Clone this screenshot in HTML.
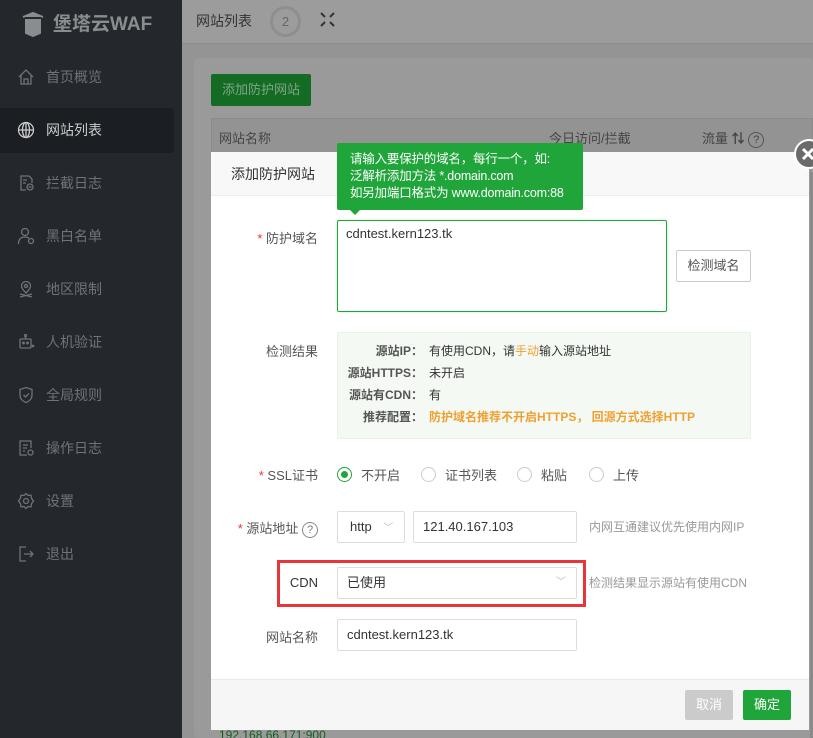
<!DOCTYPE html>
<html><head><meta charset="utf-8"><style>
*{box-sizing:border-box;margin:0;padding:0}
html,body{width:813px;height:738px;overflow:hidden}
body{position:relative;background:#949494;font-family:"Liberation Sans","Noto Sans CJK SC",sans-serif;font-size:13px;color:#333}
.abs{position:absolute}
#side{left:0;top:0;width:182px;height:738px;background:#24282d}
.mi{position:absolute;left:0;width:174px;height:45px;color:#6f7378;font-size:14px;line-height:45px;padding-left:46px}
.mi svg{position:absolute;left:17px;top:13px}
.mi.act{background:#1b1e22;color:#c9cbcd;border-radius:0 4px 4px 0}
.lbl{position:absolute;font-size:13px;color:#555;text-align:right}
.star{color:#e33}
.inp{position:absolute;border:1px solid #ddd;border-radius:2px;background:#fff;font-size:13px;color:#333;padding-left:9px}
.rad{position:absolute;width:15px;height:15px;border:1px solid #ccc;border-radius:50%;background:#fff}
.rt{position:absolute;font-size:13px;color:#555}
.hint{position:absolute;font-size:12px;color:#999}
</style></head><body>
<div id="side" class="abs">
  <svg class="abs" style="left:20px;top:11px" width="26" height="26" viewBox="0 0 26 26"><path d="M3 6 L13 2 L23 6 M5 9 H21 M6 9 V22 L13 25 L20 22 V9" fill="#8a8d90" stroke="#8a8d90" stroke-width="2"/></svg>
  <div class="abs" style="left:53px;top:9px;font-size:19px;font-weight:bold;color:#8a8d90">堡塔云WAF</div>
  <div class="mi" style="top:55px"><svg width="18" height="18" viewBox="0 0 18 18" fill="none" stroke="#6f7378" stroke-width="1.3"><path d="M2 9 L9 2 L16 9 M4 7 V16 H14 V7 M7 16 V11 H11 V16"/></svg>首页概览</div>
  <div class="mi act" style="top:108px"><svg width="18" height="18" viewBox="0 0 18 18" fill="none" stroke="#c9cbcd" stroke-width="1.3"><circle cx="9" cy="9" r="7.5"/><ellipse cx="9" cy="9" rx="3.5" ry="7.5"/><path d="M1.5 9H16.5M9 1.5V16.5"/></svg>网站列表</div>
  <div class="mi" style="top:161px"><svg width="18" height="18" viewBox="0 0 18 18" fill="none" stroke="#6f7378" stroke-width="1.3"><path d="M12 2H4V16H9M12 2L15 5V9M6 6H10M6 9H9"/><circle cx="13" cy="13" r="3"/><path d="M11.5 13H14.5"/></svg>拦截日志</div>
  <div class="mi" style="top:214px"><svg width="18" height="18" viewBox="0 0 18 18" fill="none" stroke="#6f7378" stroke-width="1.3"><circle cx="8" cy="5" r="3.5"/><path d="M1.5 17C1.5 12 4 10 8 10C10 10 11 10.5 12 11"/><circle cx="14" cy="14" r="2.5"/></svg>黑白名单</div>
  <div class="mi" style="top:267px"><svg width="18" height="18" viewBox="0 0 18 18" fill="none" stroke="#6f7378" stroke-width="1.3"><path d="M9 13C6 10 4.5 8 4.5 6A4.5 4.5 0 0 1 13.5 6C13.5 8 12 10 9 13Z"/><circle cx="9" cy="6" r="1.5"/><path d="M3 14L15 17M15 14L3 17"/></svg>地区限制</div>
  <div class="mi" style="top:320px"><svg width="18" height="18" viewBox="0 0 18 18" fill="none" stroke="#6f7378" stroke-width="1.3"><rect x="3" y="6" width="11" height="9" rx="1"/><path d="M8.5 6V3"/><circle cx="8.5" cy="2.5" r="1"/><circle cx="6.5" cy="10" r=".8"/><circle cx="10.5" cy="10" r=".8"/><path d="M15 12L17 14M17 12L15 14"/></svg>人机验证</div>
  <div class="mi" style="top:373px"><svg width="18" height="18" viewBox="0 0 18 18" fill="none" stroke="#6f7378" stroke-width="1.3"><path d="M9 1.5L15 3.5V9C15 13 12 15.5 9 16.5C6 15.5 3 13 3 9V3.5Z"/><path d="M6.5 9L8.5 11L12 7.5"/></svg>全局规则</div>
  <div class="mi" style="top:426px"><svg width="18" height="18" viewBox="0 0 18 18" fill="none" stroke="#6f7378" stroke-width="1.3"><path d="M10 16H3V2H14V9M6 6H11M6 9H10M6 12H8"/><circle cx="13.5" cy="13.5" r="2.5"/></svg>操作日志</div>
  <div class="mi" style="top:479px"><svg width="18" height="18" viewBox="0 0 18 18" fill="none" stroke="#6f7378" stroke-width="1.3"><path d="M9 1.5L11 3.5L14 3.2L14.5 6.2L16.5 9L14.5 11.8L14 14.8L11 14.5L9 16.5L7 14.5L4 14.8L3.5 11.8L1.5 9L3.5 6.2L4 3.2L7 3.5Z"/><circle cx="9" cy="9" r="2.5"/></svg>设置</div>
  <div class="mi" style="top:532px"><svg width="18" height="18" viewBox="0 0 18 18" fill="none" stroke="#6f7378" stroke-width="1.3"><path d="M9 2H3V16H9M7 9H16M13 6L16 9L13 12"/></svg>退出</div>
</div>
<div class="abs" style="left:182px;top:0;width:631px;height:44px;background:#9c9c9c;border-bottom:1px solid #8c8c8c"></div>
<div class="abs" style="left:196px;top:11px;font-size:14px;color:#333">网站列表</div>
<div class="abs" style="left:270px;top:6px;width:31px;height:31px;border:3px solid #8e8e8e;border-radius:50%;text-align:center;line-height:25px;color:#666;font-size:13px">2</div>
<svg class="abs" style="left:319px;top:11px" width="17" height="17" viewBox="0 0 17 17" fill="none" stroke="#333" stroke-width="2"><path d="M2 2L6 6M15 2L11 6M2 15L6 11M15 15L11 11"/></svg>
<div class="abs" style="left:194px;top:58px;width:619px;height:680px;background:#9a9a9a;border-radius:3px"></div>
<div class="abs" style="left:211px;top:74px;width:100px;height:32px;background:#146c24;border-radius:2px;color:#7fa585;font-size:13px;line-height:32px;text-align:center">添加防护网站</div>
<div class="abs" style="left:211px;top:118px;width:602px;height:36px;background:#939393;border:1px solid #8b8b8b"></div>
<div class="abs" style="left:219px;top:128px;color:#444">网站名称</div>
<div class="abs" style="left:549px;top:128px;color:#444">今日访问/拦截</div>
<div class="abs" style="left:702px;top:128px;color:#444">流量 <b>⇅</b> <span style="display:inline-block;width:16px;height:16px;border:1px solid #555;border-radius:50%;font-size:11px;text-align:center;line-height:14px">?</span></div>
<div class="abs" style="left:219px;top:728px;color:#135f1f;font-size:12px">192.168.66.171:900</div>

<!-- dialog -->
<div class="abs" style="left:211px;top:152px;width:598px;height:578px;background:#fff"></div>
<div class="abs" style="left:211px;top:152px;width:598px;height:44px;background:#f8f8f8;border-bottom:1px solid #eee"></div>
<div class="abs" style="left:231px;top:164px;font-size:14px;color:#333">添加防护网站</div>
<div class="abs" style="left:810px;top:172px;width:3px;height:566px;background:#8a8a8a"></div>
<div class="abs" style="left:794px;top:139px;width:30px;height:30px;border-radius:50%;background:#6a6a6a;border:2px solid #fff"></div>
<svg class="abs" style="left:801px;top:146px" width="12" height="16" viewBox="0 0 12 16" stroke="#fff" stroke-width="3"><path d="M2 3L12 13M12 3L2 13"/></svg>

<div class="lbl" style="left:230px;top:228px;width:88px"><span class="star">*</span> 防护域名</div>
<div class="abs" style="left:337px;top:220px;width:330px;height:92px;border:1px solid #20a53a;border-radius:2px;box-shadow:0 0 3px #c8eccf;padding:5px 8px;font-size:13px">cdntest.kern123.tk</div>
<div class="abs" style="left:676px;top:250px;width:75px;height:32px;border:1px solid #ccc;border-radius:2px;text-align:center;line-height:30px;font-size:13px;color:#555">检测域名</div>

<div class="abs" style="left:337px;top:143px;width:246px;height:67px;background:#20a53a;border-radius:2px;color:#fff;font-size:12.5px;line-height:17px;padding:8px 0 0 13px;white-space:nowrap;letter-spacing:-0.2px">请输入要保护的域名，每行一个，如:<br>泛解析添加方法 *.domain.com<br>如另加端口格式为 www.domain.com:88</div>
<div class="abs" style="left:350px;top:210px;width:0;height:0;border:5px solid transparent;border-top-color:#20a53a"></div>

<div class="lbl" style="left:230px;top:341px;width:88px">检测结果</div>
<div class="abs" style="left:337px;top:332px;width:414px;height:107px;background:#f4f9f4;border:1px solid #e8f2e8;border-radius:2px"></div>
<div class="abs" style="left:337px;top:340px;width:86px;text-align:right;font-weight:bold;color:#555;font-size:12px;line-height:22px">源站IP：<br>源站HTTPS：<br>源站有CDN：<br>推荐配置：</div>
<div class="abs" style="left:429px;top:340px;color:#333;font-size:12px;line-height:22px">有使用CDN，请<span style="color:#f0a030">手动</span>输入源站地址<br>未开启<br>有<br><b style="color:#f0a030">防护域名推荐不开启HTTPS， 回源方式选择HTTP</b></div>

<div class="lbl" style="left:230px;top:465px;width:88px"><span class="star">*</span> SSL证书</div>
<div class="rad" style="left:337px;top:467px;border-color:#20a53a"><div style="position:absolute;left:3px;top:3px;width:7px;height:7px;border-radius:50%;background:#20a53a"></div></div>
<div class="rt" style="left:361px;top:465px">不开启</div>
<div class="rad" style="left:421px;top:467px"></div><div class="rt" style="left:445px;top:465px">证书列表</div>
<div class="rad" style="left:517px;top:467px"></div><div class="rt" style="left:541px;top:465px">粘贴</div>
<div class="rad" style="left:589px;top:467px"></div><div class="rt" style="left:613px;top:465px">上传</div>

<div class="lbl" style="left:230px;top:518px;width:88px"><span class="star">*</span> 源站地址 <span style="display:inline-block;width:16px;height:16px;border:1px solid #888;border-radius:50%;font-size:11px;text-align:center;line-height:14px;color:#777">?</span></div>
<div class="inp" style="left:337px;top:511px;width:68px;height:32px;line-height:30px;padding-left:12px">http <span style="color:#bbb;font-size:10px;margin-left:8px">﹀</span></div>
<div class="inp" style="left:413px;top:511px;width:164px;height:32px;line-height:30px">121.40.167.103</div>
<div class="hint" style="left:589px;top:518px">内网互通建议优先使用内网IP</div>

<div class="abs" style="left:277px;top:560px;width:309px;height:47px;border:3px solid #e8353a"></div>
<div class="lbl" style="left:280px;top:575px;width:38px;color:#333">CDN</div>
<div class="inp" style="left:337px;top:567px;width:240px;height:32px;line-height:30px">已使用<span style="position:absolute;right:10px;color:#bbb;font-size:10px">﹀</span></div>
<div class="hint" style="left:589px;top:574px">检测结果显示源站有使用CDN</div>

<div class="lbl" style="left:230px;top:627px;width:88px">网站名称</div>
<div class="inp" style="left:337px;top:619px;width:240px;height:32px;line-height:30px">cdntest.kern123.tk</div>

<div class="abs" style="left:211px;top:679px;width:598px;height:51px;background:#f5f6f5;border-top:1px solid #eaeaea"></div>
<div class="abs" style="left:685px;top:690px;width:48px;height:30px;background:#cbcbcb;border-radius:2px;color:#fff;text-align:center;line-height:30px">取消</div>
<div class="abs" style="left:743px;top:690px;width:48px;height:30px;background:#20a53a;border-radius:2px;color:#fff;text-align:center;line-height:30px">确定</div>
</body></html>
